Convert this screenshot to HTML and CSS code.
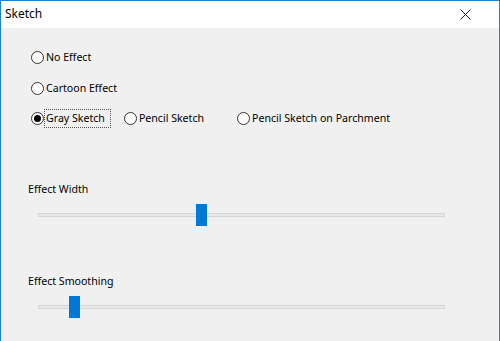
FILE: index.html
```html
<!DOCTYPE html>
<html lang="en">

<head>
    <meta charset="UTF-8">
    <title>Sketch</title>
    <link rel="stylesheet" href="styles.css">
</head>

<body>
    <div class="window">
        <div class="title-bar">
            <span class="title">Sketch</span>
            <span class="close">
                <svg width="11" height="11" viewBox="0 0 11 11">
                    <path d="M0.5 0.5 L10.5 10.5 M10.5 0.5 L0.5 10.5" stroke="#1a1a1a" stroke-width="1" fill="none" />
                </svg>
            </span>
        </div>

        <div class="content">
            <div class="radio-row">
                <label class="radio"><span class="dot"></span><span class="text">No Effect</span></label>
            </div>
            <div class="radio-row second">
                <label class="radio"><span class="dot"></span><span class="text">Cartoon Effect</span></label>
            </div>
            <div class="radio-row">
                <label class="radio checked"><span class="dot"></span><span class="text focus">Gray Sketch</span></label>
                <label class="radio pencil"><span class="dot"></span><span class="text">Pencil Sketch</span></label>
                <label class="radio parchment"><span class="dot"></span><span class="text">Pencil Sketch on Parchment</span></label>
            </div>

            <div class="slider-group first">
                <div class="slider-label">Effect Width</div>
                <div class="slider">
                    <div class="track"></div>
                    <div class="thumb" style="left: 158px;"></div>
                </div>
            </div>

            <div class="slider-group">
                <div class="slider-label">Effect Smoothing</div>
                <div class="slider">
                    <div class="track"></div>
                    <div class="thumb" style="left: 31px;"></div>
                </div>
            </div>
        </div>
    </div>
</body>

</html>
```

FILE: styles.css
```css
body {
    margin: 0;
    padding: 0;
    font-family: "Noto Sans", "Open Sans", sans-serif;
    font-size: 10.6px;
    color: #000;
    background-color: #f0f0f0;
    overflow: hidden;
}

.window {
    width: 500px;
    height: 341px;
    box-sizing: border-box;
    border: 1px solid #1883d7;
    border-bottom: none;
    background-color: #f0f0f0;
}

.title-bar {
    height: 27px;
    background-color: #fff;
    display: flex;
    align-items: center;
    justify-content: space-between;
    padding: 0 0 0 4px;
}

.title {
    font-size: 12px;
    color: #000;
    margin-top: -2px;
}

.close {
    display: flex;
    width: 46px;
    height: 27px;
    align-items: center;
    justify-content: center;
    margin-right: 11px;
}

.content {
    padding: 19px 0 0 30px;
}

.radio-row {
    display: flex;
    align-items: center;
    height: 20px;
    margin-bottom: 11px;
}

.radio-row.second {
    margin-bottom: 10px;
}

.radio {
    display: flex;
    align-items: center;
}

.dot {
    width: 11px;
    height: 11px;
    border: 1px solid #333;
    border-radius: 50%;
    background-color: #fff;
    position: relative;
}

.radio.checked .dot::after {
    content: "";
    position: absolute;
    left: 2px;
    top: 2px;
    width: 7px;
    height: 7px;
    border-radius: 50%;
    background-color: #000;
}

.text {
    padding: 1px 2px 1px 1px;
    border: 1px dotted transparent;
    line-height: 15px;
}

.text.focus {
    border-color: #555;
    padding-right: 5px;
}

.radio.pencil {
    margin-left: 13px;
}

.radio.parchment {
    margin-left: 30px;
}

.slider-group {
    margin-left: -3px;
}

.slider-group.first {
    margin-top: 54px;
}

.slider-label {
    line-height: 15px;
    margin-bottom: 7px;
}

.slider {
    position: relative;
    width: 407px;
    height: 22px;
    margin-left: 10px;
    margin-bottom: 48px;
}

.track {
    position: absolute;
    left: 0;
    right: 0;
    top: 9px;
    height: 2px;
    background-color: #e7eaea;
    border: 1px solid #d6d6d6;
}

.thumb {
    position: absolute;
    top: 0;
    width: 11px;
    height: 22px;
    background-color: #0078d7;
}
```
